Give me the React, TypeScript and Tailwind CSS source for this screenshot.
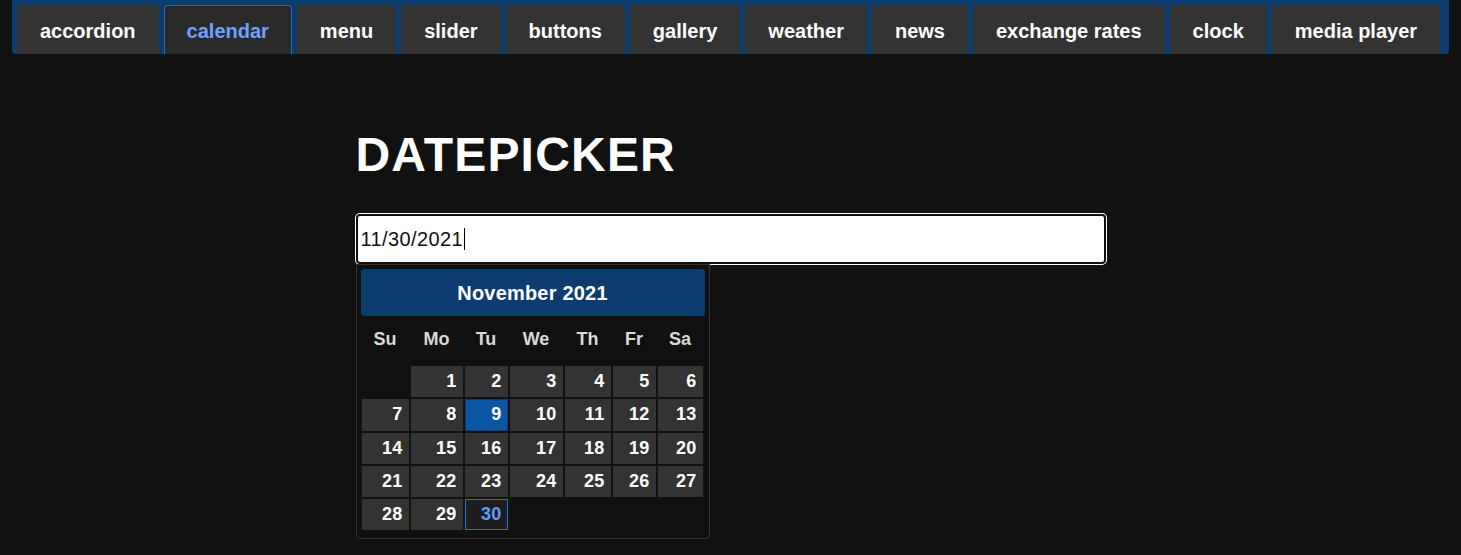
import React from "react";

const tabs = [
  "accordion",
  "calendar",
  "menu",
  "slider",
  "buttons",
  "gallery",
  "weather",
  "news",
  "exchange rates",
  "clock",
  "media player",
];

const days = ["Su", "Mo", "Tu", "We", "Th", "Fr", "Sa"];

const App: React.FC = () => {
  // November 2021 starts on a Monday
  const cells: (number | null)[] = [null];
  for (let d = 1; d <= 30; d++) cells.push(d);

  return (
    <div className="min-h-screen bg-[#111111] font-['Liberation_Sans',Arial,sans-serif]">
      <nav className="mx-[12px] flex gap-[5px] rounded-b-[4px] bg-[#0d3c6f] pl-[5px] pt-[5px]">
        {tabs.map((t) =>
          t === "calendar" ? (
            <div
              key={t}
              className="flex h-[49px] shrink-0 items-center whitespace-nowrap rounded-t-[4px] border border-b-0 border-[#1e68b8] bg-[#2a2a2a] px-[22px] pt-[2px] text-[20px] font-bold text-[#6ea2ff]"
            >
              {t}
            </div>
          ) : (
            <div
              key={t}
              className="flex h-[49px] shrink-0 items-center whitespace-nowrap rounded-t-[4px] bg-[#333333] px-[23px] pt-[2px] text-[20px] font-bold text-white"
            >
              {t}
            </div>
          )
        )}
      </nav>

      <main className="mx-auto w-[750px] pt-[73px]">
        <h1 className="text-[48px] font-bold leading-[1.15] tracking-[1.2px] text-white">
          DATEPICKER
        </h1>

        <div className="mt-[32px] flex h-[50px] items-center rounded-[4px] border-2 border-[#101010] bg-white pl-[3px] text-[20px] tracking-[0.4px] text-[#111111] ring-1 ring-white">
          <span>11/30/2021</span>
          <span className="ml-[1px] h-[22px] w-px bg-black" />
        </div>

        <div className="w-[354px] rounded-b-[4px] border border-[#353535] px-[4px] pb-[8px] pt-[4px]">
          <div className="flex h-[47px] items-center justify-center rounded-[4px] bg-[#0d3c6f] text-[20px] font-bold tracking-[0.2px] text-white">
            November 2021
          </div>

          <div className="grid grid-cols-[47px_52px_43px_53px_46px_43px_45px] gap-x-[2px] gap-y-[2px] px-[1px]">
            {days.map((d) => (
              <div
                key={d}
                className="mt-[2px] mb-[4px] flex h-[42px] items-center justify-center text-[18px] font-bold text-[#d9d9d9]"
              >
                {d}
              </div>
            ))}
            {cells.map((d, i) => {
              if (d === null) return <div key={`e${i}`} className="h-[31.2px]" />;
              let cls =
                "flex h-[31.2px] items-center justify-end border pr-[5px] text-[18px] font-bold tracking-[0.3px] ";
              if (d === 9) cls += "border-[#0a3e74] bg-[#0b56a3] text-white";
              else if (d === 30) cls += "border-[#1a73e0] bg-[#1e1e1e] text-[#5e9df5]";
              else cls += "border-[#333333] bg-[#333333] text-white";
              return (
                <div key={d} className={cls}>
                  {d}
                </div>
              );
            })}
          </div>
        </div>
      </main>
    </div>
  );
};

export default App;
